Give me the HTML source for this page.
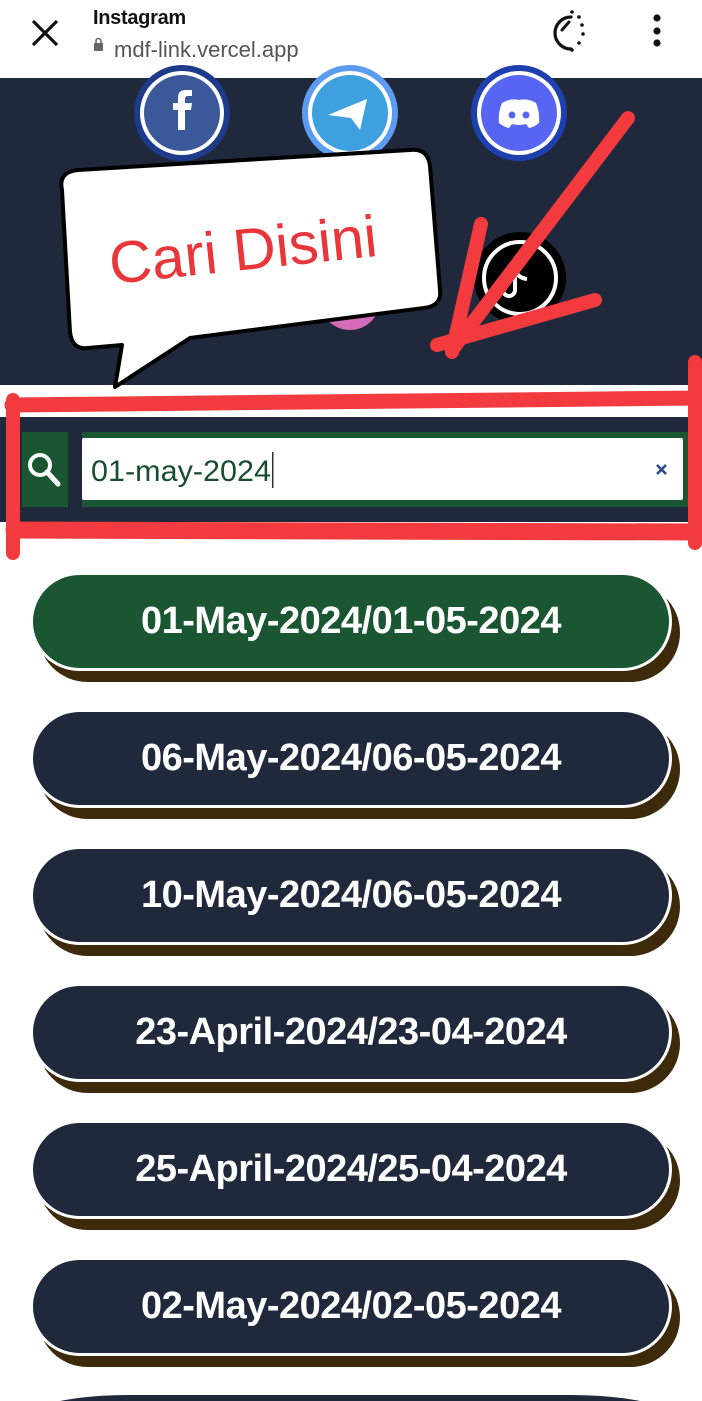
<!DOCTYPE html>
<html><head><meta charset="utf-8"><style>
*{margin:0;padding:0;box-sizing:border-box}
html,body{width:702px;height:1401px;overflow:hidden}
body{background:#fff;font-family:"Liberation Sans",sans-serif;position:relative}
.hdr{position:absolute;left:0;top:0;width:702px;height:78px;background:#fff}
.dark{position:absolute;left:0;top:78px;width:702px;height:307px;background:#1f293b}
.sbar{position:absolute;left:0;top:417px;width:702px;height:105px;background:#1f293b}
.btn{position:absolute;left:30px;width:642px;height:99px;border-radius:50px;background:#1f293b;border:3px solid #fff;box-shadow:8px 11px 0 0 #3d2a0a;color:#fff;font-weight:bold;font-size:38px;text-align:center;line-height:93px;letter-spacing:-0.5px}
.g{background:#1a5632}
</style></head><body>
<div class="hdr">
<svg width="702" height="78" style="position:absolute;left:0;top:0">
<path d="M33 21 L57 45 M57 21 L33 45" stroke="#111" stroke-width="3.2"/>
<rect x="94" y="43" width="9" height="8" rx="1" fill="#666"/><path d="M96 44 v-3 a2.5 2.5 0 0 1 5 0 v3" stroke="#666" stroke-width="1.6" fill="none"/>
<path d="M571 17 A15 15 0 0 0 571 49" stroke="#111" stroke-width="3.2" fill="none" stroke-linecap="round"/>
<g fill="#111"><circle cx="572" cy="12" r="1.8"/><circle cx="579" cy="17" r="1.8"/><circle cx="582" cy="25" r="1.8"/><circle cx="583" cy="34" r="1.8"/><circle cx="579" cy="43" r="1.8"/><circle cx="572" cy="50" r="1.8"/></g>
<path d="M562 30 L569 22" stroke="#111" stroke-width="3" stroke-linecap="round"/>
<circle cx="657" cy="18" r="3.6" fill="#111"/><circle cx="657" cy="31" r="3.6" fill="#111"/><circle cx="657" cy="43" r="3.6" fill="#111"/>
<text x="93" y="24" font-size="20" font-weight="bold" fill="#111" font-family="Liberation Sans" letter-spacing="-0.3">Instagram</text>
<text x="114" y="57" font-size="22" fill="#555" font-family="Liberation Sans">mdf-link.vercel.app</text>
</svg></div>
<div class="dark"></div>
<div class="sbar"></div>
<svg width="702" height="1401" style="position:absolute;left:0;top:0">
<circle cx="182" cy="113" r="48" fill="#1e3a8a"/><circle cx="182" cy="113" r="42" fill="#fff"/><circle cx="182" cy="113" r="38" fill="#3b5998"/>
<path d="M185 130 v-20 h6 l1-7 h-7 v-4 c0-2 1-3 3-3 h4 v-6 h-6 c-6 0-8 3-8 8 v5 h-5 v7 h5 v20z" fill="#fff"/>
<circle cx="350" cy="113" r="48" fill="#5b9bf0"/><circle cx="350" cy="113" r="42" fill="#fff"/><circle cx="350" cy="113" r="38" fill="#3fa0e0"/>
<path d="M328 115 L367 99 L360 130 L351 118 Z" fill="#fff"/>
<circle cx="519" cy="113" r="48" fill="#1e40af"/><circle cx="519" cy="113" r="42" fill="#fff"/><circle cx="519" cy="113" r="38" fill="#5865f2"/>
<path d="M502 103 q8-5 17-3 q9-2 17 3 q4 9 3 20 q-5 4-10 5 l-3-4 q-7 2-14 0 l-3 4 q-5-1-10-5 q-1-11 3-20z" fill="#fff"/>
<circle cx="512" cy="115" r="3.5" fill="#5865f2"/><circle cx="526" cy="115" r="3.5" fill="#5865f2"/>
<circle cx="350" cy="300" r="30" fill="#d56bb8"/>
<circle cx="520" cy="278" r="46" fill="#000"/><circle cx="520" cy="278" r="36" fill="none" stroke="#fff" stroke-width="4"/>
<path d="M515 270 v20 a6 6 0 1 1 -6 -6 M515 270 q3 8 12 9" stroke="#fff" stroke-width="4" fill="none"/>
<path d="M62 190 Q58 172 78 170 L410 150 Q428 148 430 166 L440 290 Q442 306 424 308 L190 338 L115 387 L122 345 L88 348 Q72 350 70 332 Z" fill="#fff" stroke="#000" stroke-width="4" stroke-linejoin="round"/>
<text x="243" y="270" font-size="59" fill="#e8363a" text-anchor="middle" font-family="Liberation Sans" transform="rotate(-6 243 250)">Cari Disini</text>
<g stroke="#f23a3f" stroke-width="14" stroke-linecap="round" fill="none">
<path d="M628 118 L452 350"/><path d="M481 224 L452 352"/><path d="M595 300 L437 345"/>
</g>
<rect x="22" y="432" width="680" height="75" fill="#1a5632"/>
<rect x="68" y="432" width="14" height="75" fill="#1f293b"/>
<rect x="82" y="438" width="601" height="62" rx="2" fill="#fff"/>
<circle cx="40" cy="465" r="10" fill="none" stroke="#fff" stroke-width="4"/><path d="M47 472 L58 484" stroke="#fff" stroke-width="5" stroke-linecap="round"/>
<text x="91" y="481" font-size="30" fill="#1a4d2e" font-family="Liberation Sans" textLength="180" lengthAdjust="spacingAndGlyphs">01-may-2024</text>
<rect x="272" y="452" width="1.5" height="36" fill="#333"/>
<path d="M657 465 L666 474 M666 465 L657 474" stroke="#2b4a8a" stroke-width="2.6"/>
<g stroke="#f23a3f" stroke-linecap="round" fill="none">
<path d="M12 405 L700 398" stroke-width="15"/>
<path d="M14 530 L700 532" stroke-width="17"/>
<path d="M13 400 L13 553" stroke-width="14"/>
<path d="M695 362 L695 543" stroke-width="14"/>
</g>
<path d="M60 1401 Q90 1395 130 1395 L570 1395 Q610 1395 640 1401 Z" fill="#1f293b"/>
</svg>
<div class="btn g" style="top:572px">01-May-2024/01-05-2024</div>
<div class="btn" style="top:709px">06-May-2024/06-05-2024</div>
<div class="btn" style="top:846px">10-May-2024/06-05-2024</div>
<div class="btn" style="top:983px">23-April-2024/23-04-2024</div>
<div class="btn" style="top:1120px">25-April-2024/25-04-2024</div>
<div class="btn" style="top:1257px">02-May-2024/02-05-2024</div>
</body></html>
